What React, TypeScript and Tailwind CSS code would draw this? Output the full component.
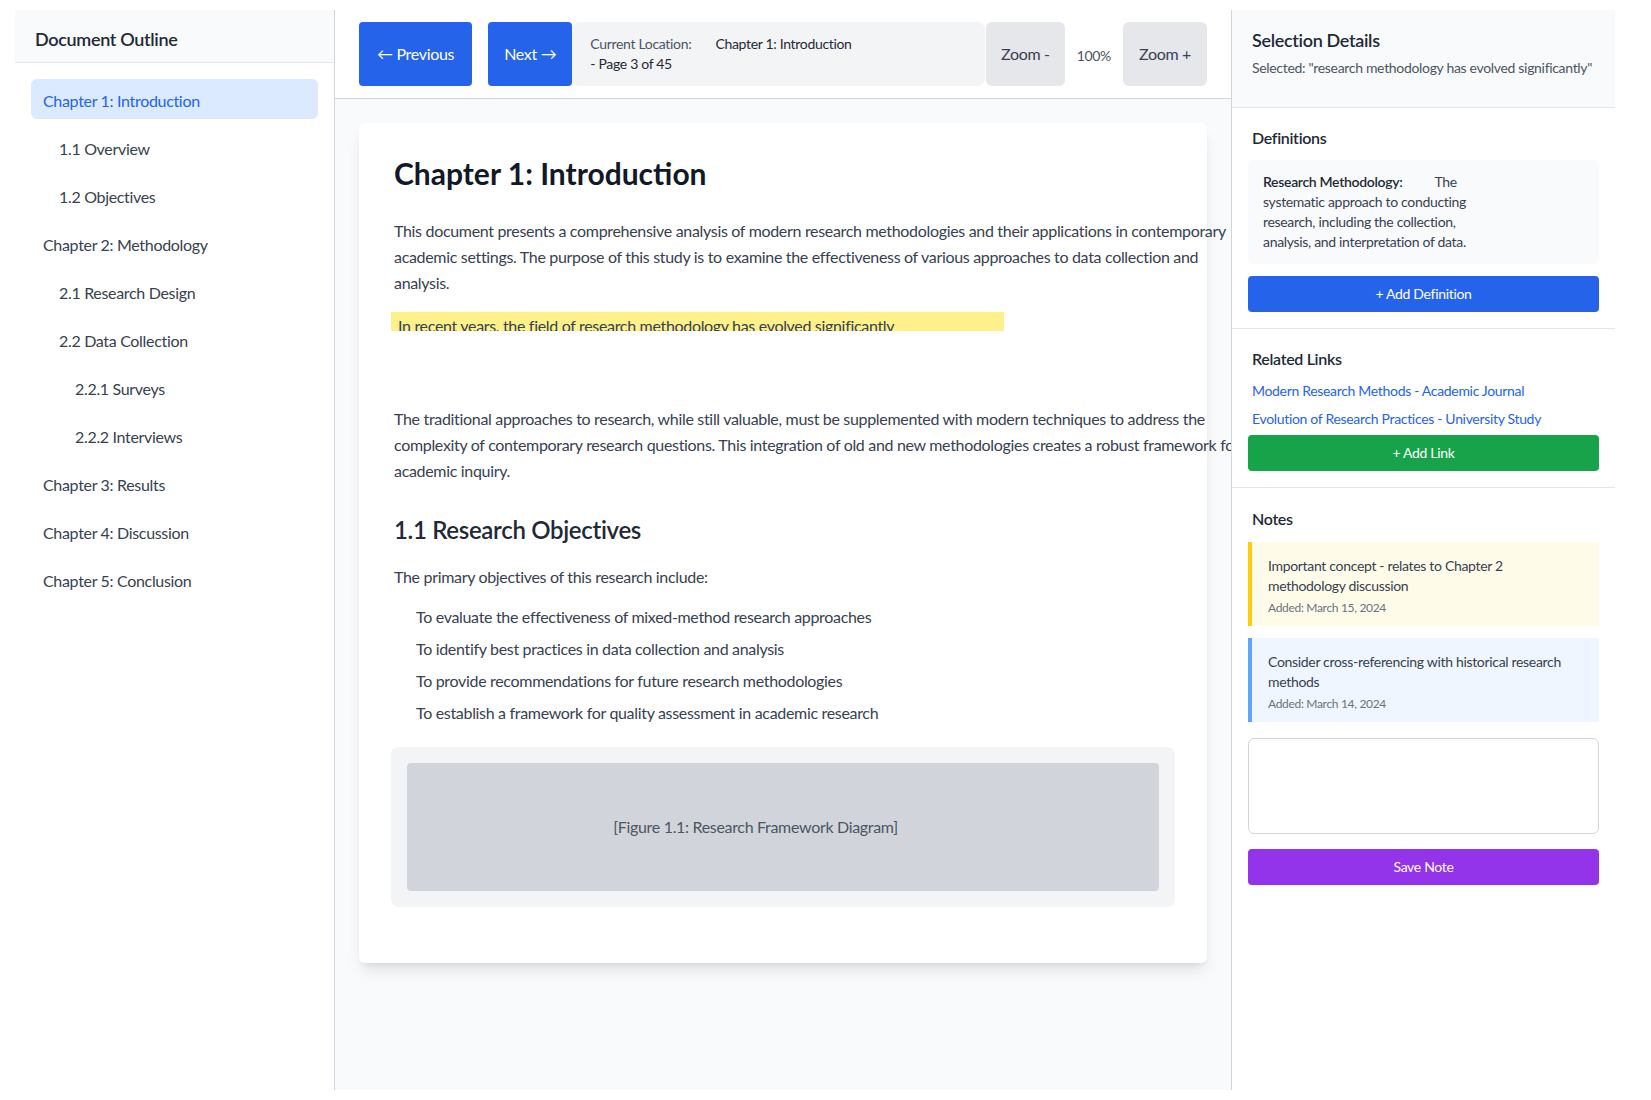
import React from "react";

const outline = [
  { label: "Chapter 1: Introduction", level: 0, active: true },
  { label: "1.1 Overview", level: 1 },
  { label: "1.2 Objectives", level: 1 },
  { label: "Chapter 2: Methodology", level: 0 },
  { label: "2.1 Research Design", level: 1 },
  { label: "2.2 Data Collection", level: 1 },
  { label: "2.2.1 Surveys", level: 2 },
  { label: "2.2.2 Interviews", level: 2 },
  { label: "Chapter 3: Results", level: 0 },
  { label: "Chapter 4: Discussion", level: 0 },
  { label: "Chapter 5: Conclusion", level: 0 },
];

const objectives = [
  "To evaluate the effectiveness of mixed-method research approaches",
  "To identify best practices in data collection and analysis",
  "To provide recommendations for future research methodologies",
  "To establish a framework for quality assessment in academic research",
];

function OutlineItem({ label, level, active }: { label: string; level: number; active?: boolean }) {
  const indent = level === 0 ? "pl-3" : level === 1 ? "pl-7" : "pl-11";
  return (
    <div
      className={`${indent} pr-3 pt-[10px] pb-[6px] mb-2 rounded-md text-base leading-6 cursor-pointer ${
        active ? "bg-[#dbeafe] text-[#2563eb]" : "text-[#374151]"
      }`}
    >
      {label}
    </div>
  );
}

export default function App() {
  return (
    <div className="bg-white min-h-screen pl-[15px] pt-[10px] font-['Lato',sans-serif] tracking-[-0.02em]">
      <div className="flex w-[1600px] h-[1080px]">
        {/* Left sidebar */}
        <aside className="w-80 shrink-0 border-r border-[#d1d5db] bg-white flex flex-col">
          <div className="h-[53px] bg-[#f9fafb] border-b border-[#e5e7eb] px-5 flex items-center">
            <h2 className="text-lg font-semibold text-[#1f2937] pt-[5px]">Document Outline</h2>
          </div>
          <nav className="p-4">
            {outline.map((o) => (
              <OutlineItem key={o.label} {...o} />
            ))}
          </nav>
        </aside>

        {/* Main */}
        <main className="flex-1 min-w-0 flex flex-col bg-[#f9fafb] overflow-hidden">
          <div className="bg-white border-b border-[#d1d5db] px-6 py-3 flex items-stretch h-[89px]">
            <button className="mr-4 px-[18px] bg-[#2563eb] text-white text-base rounded">← Previous</button>
            <button className="px-4 bg-[#2563eb] text-white text-base rounded">Next →</button>
            <div className="flex-1 bg-[#f3f4f6] rounded-lg px-[18px] py-3 text-sm leading-5 mr-px">
              <div>
                <span className="text-[#4b5563]">Current Location:</span>
                <span className="ml-6 text-[#1f2937]">Chapter 1: Introduction</span>
              </div>
              <div className="text-[#1f2937]">- Page 3 of 45</div>
            </div>
            <button className="px-[15px] bg-[#e5e7eb] text-[#374151] text-base rounded-md">Zoom -</button>
            <span className="mx-3 self-center text-sm text-[#4b5563] pt-[3px]">100%</span>
            <button className="px-4 bg-[#e5e7eb] text-[#374151] text-base rounded-md">Zoom +</button>
          </div>

          <div className="flex-1 p-6 overflow-hidden">
            <article className="w-full bg-white rounded-md shadow-lg pl-[35px] pr-8 pt-8 pb-8">
              <h1 className="text-3xl font-bold text-[#111827] mb-[27px] leading-9 tracking-normal">
                Chapter 1: Introduction
              </h1>
              <p className="w-[855px] text-base leading-[26px] text-[#374151]">
                This document presents a comprehensive analysis of modern research methodologies and their applications in
                contemporary academic settings. The purpose of this study is to examine the effectiveness of various
                approaches to data collection and analysis.
              </p>
              <div className="mt-4 -ml-[3px] w-[613px] h-[19px] overflow-hidden bg-[#fef08a]">
                <div className="pl-[7px] pt-[1px] text-base leading-[26px] text-[#374151] whitespace-nowrap">
                  In recent years, the field of research methodology has evolved significantly
                </div>
              </div>
              <p className="mt-[75px] w-[855px] text-base leading-[26px] text-[#374151]">
                The traditional approaches to research, while still valuable, must be supplemented with modern techniques
                to address the complexity of contemporary research questions. This integration of old and new
                methodologies creates a robust framework for academic inquiry.
              </p>

              <h2 className="mt-[30px] mb-[18px] text-2xl leading-8 font-semibold text-[#1f2937]">
                1.1 Research Objectives
              </h2>
              <p className="text-base leading-[26px] text-[#374151] mb-[14px]">
                The primary objectives of this research include:
              </p>
              <ul className="pl-[22px] mb-[21px]">
                {objectives.map((t) => (
                  <li key={t} className="mb-1.5 text-base leading-[26px] text-[#374151]">
                    {t}
                  </li>
                ))}
              </ul>

              <div className="bg-[#f3f4f6] rounded-lg p-4 mb-6 -ml-[3px]">
                <div className="h-32 bg-[#d1d5db] rounded flex items-center justify-center pr-[55px] text-base text-[#4b5563]">
                  [Figure 1.1: Research Framework Diagram]
                </div>
              </div>
            </article>
          </div>
        </main>

        {/* Right panel */}
        <aside className="w-96 shrink-0 border-l border-[#d1d5db] bg-white flex flex-col">
          <section className="bg-[#f9fafb] border-b border-[#e5e7eb] px-4 pt-4 pb-[29px]">
            <h2 className="px-1 text-lg leading-7 font-semibold text-[#1f2937]">Selection Details</h2>
            <p className="px-1 mt-1 text-sm leading-5 text-[#4b5563] whitespace-nowrap">
              Selected: "research methodology has evolved significantly"
            </p>
          </section>

          <section className="p-4 border-b border-[#e5e7eb]">
            <h3 className="px-1 mt-[2px] mb-[10px] text-base leading-6 font-semibold text-[#1f2937]">Definitions</h3>
            <div className="bg-[#f9fafb] rounded-md px-[15px] py-3 text-sm leading-5 text-[#374151]">
              <div className="whitespace-nowrap">
                <span className="font-semibold text-[#1f2937] mr-8">Research Methodology:</span>The
              </div>
              <div className="whitespace-nowrap">systematic approach to conducting</div>
              <div className="whitespace-nowrap">research, including the collection,</div>
              <div className="whitespace-nowrap">analysis, and interpretation of data.</div>
            </div>
            <button className="mt-3 w-full h-9 bg-[#2563eb] text-white text-sm rounded">+ Add Definition</button>
          </section>

          <section className="p-4 border-b border-[#e5e7eb]">
            <h3 className="px-1 mt-[2px] mb-[10px] text-base leading-6 font-semibold text-[#1f2937]">Related Links</h3>
            <a className="block px-1 mb-2 text-sm leading-5 text-[#2563eb]" href="#">
              Modern Research Methods - Academic Journal
            </a>
            <a className="block px-1 mb-1.5 text-sm leading-5 text-[#2563eb]" href="#">
              Evolution of Research Practices - University Study
            </a>
            <button className="w-full h-9 bg-[#16a34a] text-white text-sm rounded">+ Add Link</button>
          </section>

          <section className="p-4">
            <h3 className="px-1 mt-[3px] mb-[11px] text-base leading-6 font-semibold text-[#1f2937]">Notes</h3>
            <div className="bg-[#fefce8] border-l-4 border-[#facc15] pl-4 pr-[30px] pt-[14px] pb-[10px] mb-3">
              <p className="text-sm leading-5 text-[#374151]">Important concept - relates to Chapter 2 methodology discussion</p>
              <p className="mt-1 text-xs leading-4 text-[#6b7280]">Added: March 15, 2024</p>
            </div>
            <div className="bg-[#eff6ff] border-l-4 border-[#60a5fa] pl-4 pr-[30px] pt-[14px] pb-[10px] mb-4">
              <p className="text-sm leading-5 text-[#374151]">Consider cross-referencing with historical research methods</p>
              <p className="mt-1 text-xs leading-4 text-[#6b7280]">Added: March 14, 2024</p>
            </div>
            <textarea className="block w-full h-24 border border-[#d1d5db] rounded-md resize-none"></textarea>
            <button className="mt-[15px] w-full h-9 bg-[#9333ea] text-white text-sm rounded">Save Note</button>
          </section>
        </aside>
      </div>
    </div>
  );
}
